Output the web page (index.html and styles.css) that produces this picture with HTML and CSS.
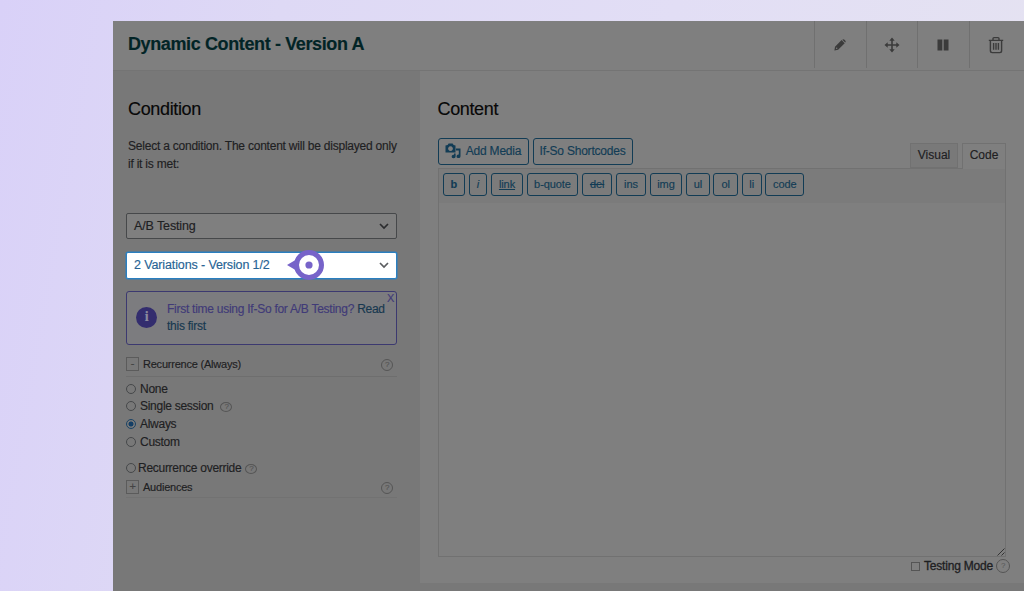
FILE: index.html
```html
<!DOCTYPE html>
<html lang="en">
<head>
    <meta charset="UTF-8">
    <meta name="viewport" content="width=device-width, initial-scale=1.0">
    <title>Dynamic Content</title>
    <link rel="stylesheet" href="styles.css">
</head>
<body>
    <div class="panel">
        <div class="panel-header">
            <h1>Dynamic Content - Version A</h1>
            <div class="tools">
                <div class="tool">
                    <svg width="12" height="12" viewBox="0 0 12 12"><path d="M.4 11.6l.6-3.9L7.6 1.1l3.1 3.1-6.6 6.6zM8.3.7q1.2-1 2.2 0l.7.7q1 1 0 2.2z" fill="#3b3b3b"/><circle cx="2.7" cy="9.2" r=".7" fill="#7f7f7f"/></svg>
                </div>
                <div class="tool">
                    <svg width="16" height="16" viewBox="0 0 16 16"><path d="M8 2v12M2 8h12" stroke="#3b3b3b" stroke-width="1.6"/><path d="M8 .5l2.7 3.2H5.3zM8 15.5l2.7-3.2H5.3zM.5 8l3.2-2.7v5.4zM15.5 8l-3.2-2.7v5.4z" fill="#3b3b3b"/></svg>
                </div>
                <div class="tool">
                    <svg width="12" height="12" viewBox="0 0 12 12"><path d="M.5.5h4.8v11H.5zM6.7.5h4.8v11H6.7z" fill="#3b3b3b"/></svg>
                </div>
                <div class="tool">
                    <svg width="16" height="18" viewBox="0 0 16 18"><path d="M.8 4.4h14.4M5 4.2V2.6Q5 1.6 6 1.6h4q1 0 1 1v1.6M2.4 4.4v10.4q0 1.8 1.8 1.8h7.6q1.8 0 1.8-1.8V4.4M5.6 7v6.8M8 7v6.8M10.4 7v6.8" fill="none" stroke="#3b3b3b" stroke-width="1.4"/></svg>
                </div>
            </div>
        </div>

        <div class="panel-body">
            <div class="condition">
                <h2>Condition</h2>
                <p class="desc">Select a condition. The content will be displayed only<br>if it is met:</p>

                <div class="select">
                    <span>A/B Testing</span>
                    <svg width="10" height="7" viewBox="0 0 10 7"><path d="M1 1l4 4 4-4" fill="none" stroke="#2b2c2e" stroke-width="1.7"/></svg>
                </div>
                <div class="select active">
                    <span>2 Variations - Version 1/2</span>
                    <svg width="10" height="7" viewBox="0 0 10 7"><path d="M1 1l4 4 4-4" fill="none" stroke="#5b5d60" stroke-width="1.7"/></svg>
                    <svg class="marker" width="38" height="30" viewBox="0 0 38 30"><path d="M0 15L11 8.5v13z" fill="#7763c9"/><circle cx="22" cy="15" r="12.5" fill="#fff" stroke="#7763c9" stroke-width="5"/><circle cx="22" cy="15" r="3.6" fill="#7763c9"/></svg>
                </div>

                <div class="notice">
                    <div class="info">i</div>
                    <p>First time using If-So for A/B Testing? <a>Read<br>this first</a></p>
                    <span class="close">X</span>
                </div>

                <div class="section">
                    <span class="toggle">-</span>
                    <span>Recurrence (Always)</span>
                    <span class="help">?</span>
                </div>
                <ul class="options">
                    <li><i class="radio"></i>None</li>
                    <li><i class="radio"></i>Single session <span class="help small">?</span></li>
                    <li><i class="radio checked"></i>Always</li>
                    <li><i class="radio"></i>Custom</li>
                    <li class="override"><i class="radio"></i>Recurrence override <span class="help small">?</span></li>
                </ul>
                <div class="section audiences">
                    <span class="toggle">+</span>
                    <span>Audiences</span>
                    <span class="help">?</span>
                </div>
            </div>

            <div class="content">
                <h2>Content</h2>
                <div class="editor-top">
                    <div class="media">
                        <svg width="16" height="16" viewBox="0 0 16 16"><path d="M.5 2.6L2.6 2l1-1.4h4l1 1.4 1.9.6v6.9H.5zM5.5 3.2a2.4 2.4 0 1 0 .01 0z" fill="#123c55" fill-rule="evenodd"/><path d="M11 5.5h4.5v7.7a2 1.8 0 1 1-1.7-1.7V7.6H11zM9 10.4h1.6v3a2 1.7 0 1 1-1.6-1.6z" fill="#123c55"/></svg>
                        Add Media
                    </div>
                    <div class="media shortcodes">If-So Shortcodes</div>
                    <div class="tabs">
                        <div class="tab">Visual</div>
                        <div class="tab current">Code</div>
                    </div>
                </div>
                <div class="editor">
                    <div class="quicktags">
                        <span class="w23"><b>b</b></span>
                        <span class="w19"><em>i</em></span>
                        <span class="w32"><u>link</u></span>
                        <span class="w52">b-quote</span>
                        <span class="w31"><del>del</del></span>
                        <span class="w30">ins</span>
                        <span class="w33">img</span>
                        <span class="w24">ul</span>
                        <span class="w25">ol</span>
                        <span class="w20">li</span>
                        <span class="w39">code</span>
                    </div>
                    <div class="textarea">
                        <svg width="8" height="8" viewBox="0 0 8 8"><path d="M.5 7.5l7-7M4.5 7.5l3-3" stroke="#333" stroke-width="1"/></svg>
                    </div>
                </div>
                <div class="testing"><i class="checkbox"></i>Testing Mode<span class="help">?</span></div>
            </div>
        </div>
    </div>
</body>
</html>
```
FILE: styles.css
```css
*{
    margin: 0;
    padding: 0;
    box-sizing: border-box;
}
body{
    height: 591px;
    padding: 21px 0 0 113px;
    overflow: hidden;
    background: linear-gradient(100deg, #d9d1f8 0%, #ded9f5 25%, #e2def5 60%, #e5e3f1 100%);
    font-family: "Liberation Sans", Arial, sans-serif;
    font-size: 12px;
    letter-spacing: -0.22px;
    color: #1e2022;
    -webkit-text-stroke: 0.15px;
}
.panel{
    height: 570px;
    background-color: #787878;
}
.panel-header{
    display: flex;
    justify-content: space-between;
    height: 50px;
    background-color: #7f7f7f;
    border-bottom: 1px solid #747474;
}
h1{
    padding: 12px 0 0 15px;
    font-size: 18px;
    line-height: 22px;
    letter-spacing: -0.38px;
    color: #022426;
}
.tools{
    display: flex;
}
.tool{
    display: flex;
    align-items: center;
    justify-content: center;
    width: 51.5px;
    height: 47px;
    border-left: 1px solid #707070;
}
.tool:last-child{
    width: 55.5px;
    padding-right: 2px;
}
.panel-body{
    display: flex;
    height: 520px;
}
.condition{
    width: 307px;
    padding: 27px 23px 0 13px;
}
h2{
    font-size: 18px;
    font-weight: normal;
    line-height: 22px;
    letter-spacing: -0.35px;
    color: #080808;
}
.condition h2{
    padding-left: 2px;
}
.desc{
    height: 75px;
    margin: 18px 0 0 2px;
    line-height: 17.5px;
    white-space: nowrap;
}

/* dropdowns */
.select{
    position: relative;
    display: flex;
    align-items: center;
    justify-content: space-between;
    height: 26px;
    padding: 0 7px;
    border: 1px solid #46484a;
    border-radius: 2px;
    background-color: #7f7f7f;
    font-size: 12.5px;
    letter-spacing: -0.12px;
}
.select.active{
    height: 27px;
    margin-top: 13px;
    padding-bottom: 1px;
    border: 1px solid #2a7fc0;
    box-shadow: 0 0 0 0.5px #2a7fc0;
    background-color: #fff;
    color: #276394;
}
.marker{
    position: absolute;
    left: 160px;
    top: -3px;
}

.notice{
    position: relative;
    display: flex;
    height: 54px;
    margin-top: 12px;
    padding: 9px 0 0 9px;
    border: 1px solid #3c3970;
    border-radius: 3px;
    background-color: #7c7c7f;
    color: #403a78;
    line-height: 16.5px;
    letter-spacing: -0.26px;
    white-space: nowrap;
}
.info{
    width: 21px;
    height: 21px;
    margin: 6px 10px 0 0;
    border-radius: 50%;
    background-color: #332d6e;
    color: #8c8ba0;
    font: bold 14px/20px "Liberation Serif", serif;
    text-align: center;
}
.notice a{
    color: #17384f;
}
.close{
    position: absolute;
    right: 2px;
    top: -2px;
    font-size: 11px;
}

.section{
    display: flex;
    align-items: center;
    height: 26px;
    margin-top: 6px;
    border-bottom: 1px solid #6e6e6e;
    font-size: 11px;
}
.toggle{
    width: 13px;
    height: 14px;
    margin-right: 4px;
    border: 1px solid #5b5b5b;
    line-height: 11px;
    text-align: center;
    color: #444;
}
.help{
    width: 12px;
    height: 12px;
    border: 1px solid #555;
    border-radius: 50%;
    font-size: 8px;
    line-height: 10px;
    text-align: center;
    color: #555;
}
.section .help{
    margin: 2px 4px 0 auto;
}
.options{
    padding-top: 3px;
    list-style: none;
}
.options li{
    display: flex;
    align-items: center;
    height: 17.6px;
    letter-spacing: -0.28px;
}
.radio{
    width: 10px;
    height: 10px;
    margin-right: 4px;
    border: 1px solid #46484a;
    border-radius: 50%;
}
.radio.checked{
    border-color: #1c4466;
    background: radial-gradient(circle, #143f66 2.2px, transparent 2.8px);
}
.help.small{
    height: 10px;
    margin: 1px 0 0 7px;
    line-height: 8px;
}
.options .override{
    margin-top: 9px;
}
.override .radio{
    margin-right: 2px;
}
.override .help.small{
    margin-left: 4px;
}
.section.audiences{
    height: 21px;
    margin-top: 0;
    border-color: #727272;
}

/* editor column */
.content{
    flex: 1;
    height: 512px;
    padding: 27px 18px 0 17.5px;
    background-color: #7f7f7f;
}
.editor-top{
    display: flex;
    height: 48px;
    padding-top: 18px;
    gap: 4px;
}
.media{
    display: flex;
    align-items: center;
    justify-content: center;
    gap: 5px;
    width: 91px;
    height: 27px;
    padding-bottom: 1px;
    border: 1px solid #123c55;
    border-radius: 3px;
    color: #123c55;
    white-space: nowrap;
}
.shortcodes{
    width: 100px;
}
.tabs{
    display: flex;
    gap: 4px;
    margin: 5px 0 0 auto;
    position: relative;
    z-index: 1;
}
.tab{
    width: 48px;
    height: 25px;
    border: 1px solid #717171;
    background-color: #797979;
    line-height: 23px;
    text-align: center;
    letter-spacing: 0;
}
.tab.current{
    width: 44px;
    height: 26px;
    border-bottom: none;
    background-color: #7f7f7f;
}
.editor{
    height: 389px;
    border: 1px solid #717171;
}
.quicktags{
    display: flex;
    gap: 3.6px;
    height: 34px;
    padding: 4px 0 0 4px;
    background-color: #7b7b7b;
}
.quicktags span{
    height: 23px;
    border: 1px solid #123c55;
    border-radius: 3px;
    color: #123c55;
    font-size: 11px;
    letter-spacing: -0.1px;
    line-height: 20px;
    text-align: center;
}
.w19{ width: 18.8px; }
.w20{ width: 20px; }
.w23{ width: 22.5px; }
.w24{ width: 23.8px; }
.w25{ width: 24.8px; }
.w30{ width: 30px; }
.w31{ width: 30.5px; }
.w32{ width: 32px; }
.w33{ width: 32.8px; }
.w39{ width: 39px; }
.w52{ width: 51.7px; }
.textarea{
    display: flex;
    align-items: flex-end;
    justify-content: flex-end;
    height: 353px;
}
.testing{
    display: flex;
    align-items: center;
    justify-content: flex-end;
    height: 18px;
    margin-right: -4px;
    letter-spacing: -0.2px;
    -webkit-text-stroke: 0.3px;
}
.checkbox{
    width: 9px;
    height: 9px;
    margin-right: 4px;
    border: 1px solid #555;
}
.testing .help{
    width: 14px;
    height: 14px;
    margin-left: 3px;
    line-height: 12px;
    -webkit-text-stroke: 0;
}
```
